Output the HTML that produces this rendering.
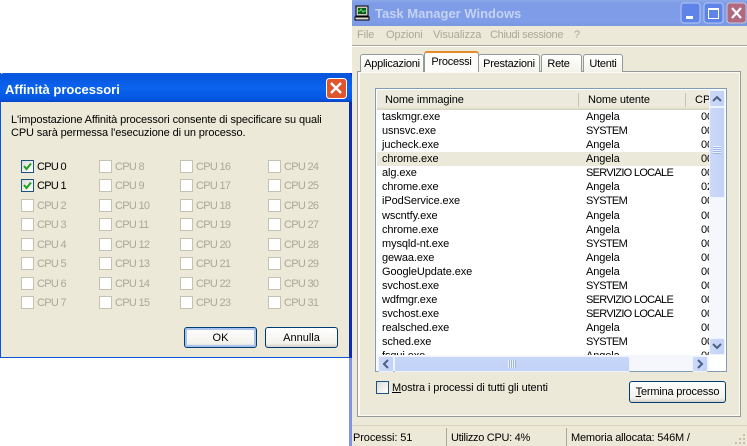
<!DOCTYPE html>
<html><head><meta charset="utf-8">
<style>
html,body{margin:0;padding:0;width:747px;height:446px;overflow:hidden;background:#fff;}
body{position:relative;font-family:"Liberation Sans",sans-serif;font-size:11px;color:#000;}
div,span{position:absolute;white-space:nowrap;box-sizing:border-box;}
.t{line-height:14px;height:14px;letter-spacing:-.1px;}
.cap{letter-spacing:-.7px;}
.cb{width:13px;height:13px;border:1px solid #c5c2b3;background:#fff;}
.cb.on{border:1px solid #1c5180;background:linear-gradient(135deg,#dcdcd7,#fff);}
.d{color:#aca899;}
.btn{border:1px solid #003c74;border-radius:3px;background:linear-gradient(#fff,#f3f2ec 80%,#d6d0c5);text-align:center;}
.tab{border:1px solid #919b9c;border-bottom:none;border-radius:3px 3px 0 0;background:linear-gradient(#fff,#f3f2ea);text-align:center;line-height:19px;letter-spacing:-.25px;}
.sb{background:linear-gradient(90deg,#cdd9f8,#c1d2f8);border:1px solid #eef3fe;border-radius:2px;}
.ti{font-weight:bold;font-size:13px;line-height:16px;height:16px;letter-spacing:0;}
</style></head><body>

<!-- Task manager window -->
<div style="left:352px;top:0;width:395px;height:446px;background:#ece9d8;"></div>
<div style="left:349px;top:358px;width:3px;height:88px;background:#8193e2;"></div>
<div style="left:352px;top:0;width:395px;height:26px;background:linear-gradient(#8ba8ea,#7d9be6 15%,#7f9de8 80%,#7b98e3);"></div>
<svg style="position:absolute;left:354px;top:5px" width="17" height="17" viewBox="0 0 17 17">
<rect x="2" y="1" width="12" height="10" fill="#c8c8c0" stroke="#000"/><rect x="4" y="3" width="8" height="6" fill="#0a5a20"/>
<path d="M4 6h2l1-2 2 3 1-1h2" stroke="#5fe05f" fill="none"/>
<rect x="1" y="12" width="14" height="3" fill="#d8d8d0" stroke="#000"/></svg>
<div class="ti" style="left:375px;top:6px;color:#c5d3f2;">Task Manager Windows</div>
<!-- window buttons -->
<svg style="position:absolute;left:680px;top:2px" width="67" height="22" viewBox="0 0 67 22">
<rect x="1" y="1" width="19" height="20" rx="3" fill="#5d84e6" stroke="#b6c7f2"/>
<rect x="6" y="14" width="7" height="3" fill="#fff"/>
<rect x="24" y="1" width="19" height="20" rx="3" fill="#5d84e6" stroke="#b6c7f2"/>
<rect x="28.5" y="6.500" width="10" height="10" fill="none" stroke="#fff"/><rect x="28" y="6" width="11" height="2" fill="#fff"/>
<rect x="47" y="1" width="19" height="20" rx="3" fill="#b0697e" stroke="#c9c3d6"/>
<path d="M52 6l9 10M61 6l-9 10" stroke="#fff" stroke-width="2.200"/></svg>
<!-- menu -->
<div class="t d" style="left:357px;top:28px;">File</div>
<div class="t d" style="left:386px;top:28px;">Opzioni</div>
<div class="t d" style="left:433px;top:28px;">Visualizza</div>
<div class="t d" style="left:490px;top:28px;letter-spacing:-.3px;">Chiudi sessione</div>
<div class="t d" style="left:574px;top:28px;">?</div>
<div style="left:352px;top:45px;width:395px;height:1px;background:#aca899;"></div>
<div style="left:352px;top:46px;width:395px;height:1px;background:#fff;"></div>
<!-- tab panel -->
<div style="left:357px;top:71px;width:384px;height:346px;border:1px solid #919b9c;background:#fbfaf6;"></div>
<div style="left:360px;top:73px;width:379px;height:342px;background:#ece9d8;"></div>
<div class="tab" style="left:360px;top:54px;width:64px;height:18px;">Applicazioni</div>
<div class="tab" style="left:478px;top:54px;width:62px;height:18px;">Prestazioni</div>
<div class="tab" style="left:541px;top:54px;width:41px;height:18px;padding-right:6px;">Rete</div>
<div class="tab" style="left:583px;top:54px;width:40px;height:18px;">Utenti</div>
<div class="tab" style="left:424px;top:51px;width:55px;height:21px;background:#fcfcfa;border-top:2px solid #e68b2c;line-height:18px;">Processi</div>
<!-- list -->
<div style="left:375px;top:88px;width:352px;height:284px;border:1px solid #7f9db9;background:#fff;"></div>
<div style="left:377px;top:90px;width:332px;height:20px;background:linear-gradient(#ecebdf,#ebeadb 85%,#d3d0bd);"></div>
<div style="left:578px;top:93px;width:1px;height:14px;background:#c7c5b2;"></div>
<div style="left:685px;top:93px;width:1px;height:14px;background:#c7c5b2;"></div>
<div class="t" style="left:385px;top:93px;">Nome immagine</div>
<div class="t" style="left:588px;top:93px;">Nome utente</div>
<div style="left:695px;top:93px;width:14px;height:14px;line-height:14px;overflow:hidden;">CPU</div>
<div style="left:377px;top:152px;width:332px;height:14px;background:#ebe9da;"></div>
<div id="rows" style="left:377px;top:110px;width:332px;height:245px;overflow:hidden;">
<div class="t" style="left:5px;top:0px;">taskmgr.exe</div><div class="t" style="left:209px;top:0px;">Angela</div><div class="t" style="left:324px;top:0px;">00</div>
<div class="t" style="left:5px;top:14px;">usnsvc.exe</div><div class="t cap" style="left:209px;top:14px;">SYSTEM</div><div class="t" style="left:324px;top:14px;">00</div>
<div class="t" style="left:5px;top:28px;">jucheck.exe</div><div class="t" style="left:209px;top:28px;">Angela</div><div class="t" style="left:324px;top:28px;">00</div>
<div class="t" style="left:5px;top:42px;">chrome.exe</div><div class="t" style="left:209px;top:42px;">Angela</div><div class="t" style="left:324px;top:42px;">00</div>
<div class="t" style="left:5px;top:56px;">alg.exe</div><div class="t cap" style="left:209px;top:56px;">SERVIZIO LOCALE</div><div class="t" style="left:324px;top:56px;">00</div>
<div class="t" style="left:5px;top:70px;">chrome.exe</div><div class="t" style="left:209px;top:70px;">Angela</div><div class="t" style="left:324px;top:70px;">02</div>
<div class="t" style="left:5px;top:84px;">iPodService.exe</div><div class="t cap" style="left:209px;top:84px;">SYSTEM</div><div class="t" style="left:324px;top:84px;">00</div>
<div class="t" style="left:5px;top:99px;">wscntfy.exe</div><div class="t" style="left:209px;top:99px;">Angela</div><div class="t" style="left:324px;top:99px;">00</div>
<div class="t" style="left:5px;top:113px;">chrome.exe</div><div class="t" style="left:209px;top:113px;">Angela</div><div class="t" style="left:324px;top:113px;">00</div>
<div class="t" style="left:5px;top:127px;">mysqld-nt.exe</div><div class="t cap" style="left:209px;top:127px;">SYSTEM</div><div class="t" style="left:324px;top:127px;">00</div>
<div class="t" style="left:5px;top:141px;">gewaa.exe</div><div class="t" style="left:209px;top:141px;">Angela</div><div class="t" style="left:324px;top:141px;">00</div>
<div class="t" style="left:5px;top:155px;">GoogleUpdate.exe</div><div class="t" style="left:209px;top:155px;">Angela</div><div class="t" style="left:324px;top:155px;">00</div>
<div class="t" style="left:5px;top:169px;">svchost.exe</div><div class="t cap" style="left:209px;top:169px;">SYSTEM</div><div class="t" style="left:324px;top:169px;">00</div>
<div class="t" style="left:5px;top:183px;">wdfmgr.exe</div><div class="t cap" style="left:209px;top:183px;">SERVIZIO LOCALE</div><div class="t" style="left:324px;top:183px;">00</div>
<div class="t" style="left:5px;top:197px;">svchost.exe</div><div class="t cap" style="left:209px;top:197px;">SERVIZIO LOCALE</div><div class="t" style="left:324px;top:197px;">00</div>
<div class="t" style="left:5px;top:211px;">realsched.exe</div><div class="t" style="left:209px;top:211px;">Angela</div><div class="t" style="left:324px;top:211px;">00</div>
<div class="t" style="left:5px;top:225px;">sched.exe</div><div class="t cap" style="left:209px;top:225px;">SYSTEM</div><div class="t" style="left:324px;top:225px;">00</div>
<div class="t" style="left:5px;top:239px;">fsqui.exe</div><div class="t" style="left:209px;top:239px;">Angela</div><div class="t" style="left:324px;top:239px;">00</div>
</div>
<!-- vertical scrollbar -->
<div style="left:709px;top:90px;width:16px;height:265px;background:#f5f7fd;"></div>
<div class="sb" style="left:709px;top:90px;width:16px;height:17px;"></div>
<div class="sb" style="left:709px;top:107px;width:16px;height:91px;"></div>
<div style="left:713px;top:146px;width:8px;height:8px;background:repeating-linear-gradient(#eef3fe 0 1px,#9db4ea 1px 2px);"></div>
<div class="sb" style="left:709px;top:338px;width:16px;height:17px;"></div>
<svg style="position:absolute;left:709px;top:90px" width="16" height="265" viewBox="0 0 16 265">
<path d="M4 11l4-4 4 4" fill="none" stroke="#4d6185" stroke-width="2"/>
<path d="M4 254l4 4 4-4" fill="none" stroke="#4d6185" stroke-width="2"/></svg>
<!-- horizontal scrollbar -->
<div style="left:377px;top:355px;width:332px;height:16px;background:#f5f7fd;"></div>
<div class="sb" style="left:378px;top:356px;width:16px;height:16px;"></div>
<div class="sb" style="left:394px;top:356px;width:236px;height:16px;background:linear-gradient(#c8d7f9,#c1d2f8);"></div>
<div style="left:508px;top:360px;width:8px;height:8px;background:repeating-linear-gradient(90deg,#eef3fe 0 1px,#9db4ea 1px 2px);"></div>
<div class="sb" style="left:692px;top:356px;width:16px;height:16px;"></div>
<svg style="position:absolute;left:378px;top:356px" width="330" height="16" viewBox="0 0 330 16">
<path d="M10 4l-4 4 4 4" fill="none" stroke="#4d6185" stroke-width="2"/>
<path d="M320 4l4 4-4 4" fill="none" stroke="#4d6185" stroke-width="2"/></svg>
<!-- bottom controls -->
<div class="cb on" style="left:376px;top:381px;"></div>
<div class="t" style="left:392px;top:381px;"><u>M</u>ostra i processi di tutti gli utenti</div>
<div class="btn" style="left:629px;top:381px;width:97px;height:22px;line-height:21px;letter-spacing:-.2px;"><u>T</u>ermina processo</div>
<!-- status bar -->
<div style="left:352px;top:425px;width:395px;height:1px;background:#d8d4c0;"></div>
<div style="left:446px;top:428px;width:1px;height:18px;background:#aca899;"></div>
<div style="left:566px;top:428px;width:1px;height:18px;background:#aca899;"></div>
<div class="t" style="left:353px;top:431px;">Processi: 51</div>
<div class="t" style="left:451px;top:431px;letter-spacing:-.3px;">Utilizzo CPU: 4%</div>
<div class="t" style="left:571px;top:431px;letter-spacing:-.2px;">Memoria allocata: 546M /</div>
<svg style="position:absolute;left:735px;top:434px" width="12" height="12" viewBox="0 0 12 12" fill="#c4c0ac">
<rect x="8" y="0" width="2" height="2"/><rect x="4" y="4" width="2" height="2"/><rect x="8" y="4" width="2" height="2"/>
<rect x="0" y="8" width="2" height="2"/><rect x="4" y="8" width="2" height="2"/><rect x="8" y="8" width="2" height="2"/></svg>

<!-- Dialog -->
<div style="left:0;top:73px;width:351px;height:285px;background:#ece9d8;border-left:1px solid #0855dd;border-bottom:1px solid #0855dd;"></div>
<div style="left:349px;top:73px;width:3px;height:285px;background:#0a2bb0;"></div>
<div style="left:0;top:73px;width:352px;height:29px;background:linear-gradient(#0a5be0,#0855dd 10%,#0a63ee 50%,#0556e0 90%,#0343c8);border-radius:4px 4px 0 0;"></div>
<div class="ti" style="left:5px;top:82px;color:#fff;">Affinità processori</div>
<svg style="position:absolute;left:326px;top:78px" width="21" height="21" viewBox="0 0 21 21">
<rect x="0.500" y="0.500" width="20" height="20" rx="3" fill="#e0562c" stroke="#fff"/>
<path d="M5 5l10 10M15 5L5 15" stroke="#fff" stroke-width="2.400"/></svg>
<div class="t" style="left:11px;top:113px;letter-spacing:-.12px;">L'impostazione Affinità processori consente di specificare su quali</div>
<div class="t" style="left:11px;top:126px;letter-spacing:-.12px;">CPU sarà permessa l'esecuzione di un processo.</div>

<div class="cb on" style="left:21px;top:160px;"></div><div class="t cap" style="left:37px;top:160px;">CPU 0</div>
<div class="cb on" style="left:21px;top:179px;"></div><div class="t cap" style="left:37px;top:179px;">CPU 1</div>
<svg style="position:absolute;left:21px;top:160px" width="13" height="32" viewBox="0 0 13 32">
<path d="M3 6l2.500 3L10 3.500" fill="none" stroke="#21a121" stroke-width="2"/>
<path d="M3 25l2.500 3L10 22.500" fill="none" stroke="#21a121" stroke-width="2"/></svg>
<div class="cb" style="left:21px;top:199px;"></div><div class="t d cap" style="left:37px;top:199px;">CPU 2</div>
<div class="cb" style="left:21px;top:218px;"></div><div class="t d cap" style="left:37px;top:218px;">CPU 3</div>
<div class="cb" style="left:21px;top:238px;"></div><div class="t d cap" style="left:37px;top:238px;">CPU 4</div>
<div class="cb" style="left:21px;top:257px;"></div><div class="t d cap" style="left:37px;top:257px;">CPU 5</div>
<div class="cb" style="left:21px;top:277px;"></div><div class="t d cap" style="left:37px;top:277px;">CPU 6</div>
<div class="cb" style="left:21px;top:296px;"></div><div class="t d cap" style="left:37px;top:296px;">CPU 7</div>

<div class="cb" style="left:99px;top:160px;"></div><div class="t d cap" style="left:115px;top:160px;">CPU 8</div>
<div class="cb" style="left:99px;top:179px;"></div><div class="t d cap" style="left:115px;top:179px;">CPU 9</div>
<div class="cb" style="left:99px;top:199px;"></div><div class="t d cap" style="left:115px;top:199px;">CPU 10</div>
<div class="cb" style="left:99px;top:218px;"></div><div class="t d cap" style="left:115px;top:218px;">CPU 11</div>
<div class="cb" style="left:99px;top:238px;"></div><div class="t d cap" style="left:115px;top:238px;">CPU 12</div>
<div class="cb" style="left:99px;top:257px;"></div><div class="t d cap" style="left:115px;top:257px;">CPU 13</div>
<div class="cb" style="left:99px;top:277px;"></div><div class="t d cap" style="left:115px;top:277px;">CPU 14</div>
<div class="cb" style="left:99px;top:296px;"></div><div class="t d cap" style="left:115px;top:296px;">CPU 15</div>

<div class="cb" style="left:180px;top:160px;"></div><div class="t d cap" style="left:196px;top:160px;">CPU 16</div>
<div class="cb" style="left:180px;top:179px;"></div><div class="t d cap" style="left:196px;top:179px;">CPU 17</div>
<div class="cb" style="left:180px;top:199px;"></div><div class="t d cap" style="left:196px;top:199px;">CPU 18</div>
<div class="cb" style="left:180px;top:218px;"></div><div class="t d cap" style="left:196px;top:218px;">CPU 19</div>
<div class="cb" style="left:180px;top:238px;"></div><div class="t d cap" style="left:196px;top:238px;">CPU 20</div>
<div class="cb" style="left:180px;top:257px;"></div><div class="t d cap" style="left:196px;top:257px;">CPU 21</div>
<div class="cb" style="left:180px;top:277px;"></div><div class="t d cap" style="left:196px;top:277px;">CPU 22</div>
<div class="cb" style="left:180px;top:296px;"></div><div class="t d cap" style="left:196px;top:296px;">CPU 23</div>

<div class="cb" style="left:268px;top:160px;"></div><div class="t d cap" style="left:284px;top:160px;">CPU 24</div>
<div class="cb" style="left:268px;top:179px;"></div><div class="t d cap" style="left:284px;top:179px;">CPU 25</div>
<div class="cb" style="left:268px;top:199px;"></div><div class="t d cap" style="left:284px;top:199px;">CPU 26</div>
<div class="cb" style="left:268px;top:218px;"></div><div class="t d cap" style="left:284px;top:218px;">CPU 27</div>
<div class="cb" style="left:268px;top:238px;"></div><div class="t d cap" style="left:284px;top:238px;">CPU 28</div>
<div class="cb" style="left:268px;top:257px;"></div><div class="t d cap" style="left:284px;top:257px;">CPU 29</div>
<div class="cb" style="left:268px;top:277px;"></div><div class="t d cap" style="left:284px;top:277px;">CPU 30</div>
<div class="cb" style="left:268px;top:296px;"></div><div class="t d cap" style="left:284px;top:296px;">CPU 31</div>

<div class="btn" style="left:184px;top:327px;width:73px;height:21px;line-height:21px;box-shadow:inset 0 0 0 2px #a9c2ee;">OK</div>
<div class="btn" style="left:265px;top:327px;width:73px;height:21px;line-height:21px;">Annulla</div>
</body></html>
